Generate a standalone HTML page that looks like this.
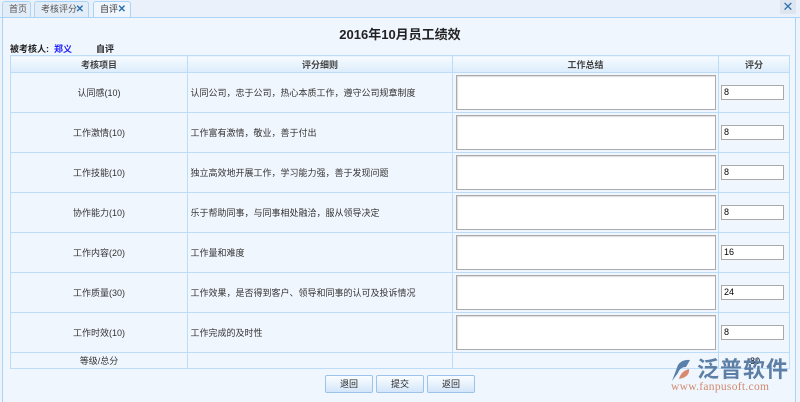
<!DOCTYPE html>
<html><head><meta charset="utf-8"><style>
*{box-sizing:border-box;margin:0;padding:0}
body{width:800px;height:402px;background:#eef4fc;font-family:"Liberation Sans","Noto Sans CJK SC",sans-serif;font-size:9px;color:#333;position:relative;overflow:hidden}
.tabs{position:absolute;left:0;top:0;width:800px;height:18px;background:#eaf1fa;border-bottom:1px solid #a9d4f5}
.tab{position:absolute;top:1px;height:17px;border:1px solid #a9d4f5;border-bottom:none;background:#e3edf8;border-radius:3px 3px 0 0;font-size:9px;line-height:15px;padding-left:6px;color:#555}
.tab b{color:#2a6fb3;font-size:10px;position:absolute;right:4px;top:0}
.panel{position:absolute;left:2px;top:17px;width:794px;height:385px;border:1px solid #a9d4f5;border-bottom:none;background:#f0f6fe}
.close{position:absolute;right:4px;top:0;width:16px;height:14px;background:#dde6ef;color:#2a6fb3;font-size:13px;line-height:14px;text-align:center}
h1{position:absolute;left:0;width:800px;top:24px;text-align:center;font-size:13px;font-weight:bold;color:#222}
.who{position:absolute;left:10px;top:42px;font-size:9px;font-weight:bold;color:#222}
table{position:absolute;left:10px;top:55px;border-collapse:collapse;width:780px}
td{border:1px solid #bcdcf7;font-size:9px;color:#333}
th{border:1px solid #bcdcf7;height:17px;font-size:9px;font-weight:bold;color:#444;background:linear-gradient(#f6fbff,#dcecfb)}
tr.r td{height:40px}
.c{text-align:center}
.ta{width:260px;height:35px;border:1px solid #aaa;background:#fff;margin:0 0 0 3px;display:block;box-shadow:inset 1px 1px 1px #ddd}
.in{width:63px;height:15px;border:1px solid #aaa;background:#fff;margin-left:2px;font-size:9px;line-height:13px;padding-left:2px;color:#000}
.btn{position:absolute;top:375px;width:48px;height:18px;border:1px solid #9cc4ea;border-radius:2px;background:linear-gradient(#fafdff,#d4e6fa);text-align:center;font-size:9px;line-height:16px;color:#222}
.logo{position:absolute;left:668px;top:355px}
</style></head><body>
<div class="tabs">
<div class="tab" style="left:2px;width:29px">首页</div>
<div class="tab" style="left:34px;width:55px">考核评分<b>✕</b></div>
<div class="tab" style="left:93px;width:38px;background:#f0f6fe;height:18px;color:#333">自评<b>✕</b></div>
<div class="close">✕</div>
</div>
<div class="panel"></div>
<h1>2016年10月员工绩效</h1>
<div class="who">被考核人:&nbsp; <span style="color:#1a1aff">郑义</span><span style="margin-left:24px">自评</span></div>
<table>
<tr><th style="width:177px">考核项目</th><th style="width:265px">评分细则</th><th style="width:266px">工作总结</th><th>评分</th></tr>
<tr class="r"><td class="c">认同感(10)</td><td>&nbsp;认同公司，忠于公司，热心本质工作，遵守公司规章制度</td><td><div class="ta"></div></td><td><div class="in">8</div></td></tr>
<tr class="r"><td class="c">工作激情(10)</td><td>&nbsp;工作富有激情，敬业，善于付出</td><td><div class="ta"></div></td><td><div class="in">8</div></td></tr>
<tr class="r"><td class="c">工作技能(10)</td><td>&nbsp;独立高效地开展工作，学习能力强，善于发现问题</td><td><div class="ta"></div></td><td><div class="in">8</div></td></tr>
<tr class="r"><td class="c">协作能力(10)</td><td>&nbsp;乐于帮助同事，与同事相处融洽，服从领导决定</td><td><div class="ta"></div></td><td><div class="in">8</div></td></tr>
<tr class="r"><td class="c">工作内容(20)</td><td>&nbsp;工作量和难度</td><td><div class="ta"></div></td><td><div class="in">16</div></td></tr>
<tr class="r"><td class="c">工作质量(30)</td><td>&nbsp;工作效果，是否得到客户、领导和同事的认可及投诉情况</td><td><div class="ta"></div></td><td><div class="in">24</div></td></tr>
<tr class="r"><td class="c">工作时效(10)</td><td>&nbsp;工作完成的及时性</td><td><div class="ta"></div></td><td><div class="in">8</div></td></tr>
<tr><td class="c" style="height:16px">等级/总分</td><td></td><td></td><td style="padding-left:31px;color:#000">80</td></tr>
</table>
<div class="btn" style="left:325px">退回</div>
<div class="btn" style="left:376px">提交</div>
<div class="btn" style="left:427px">返回</div>
<div class="logo">
<svg width="26" height="26" viewBox="0 0 26 26" style="position:absolute;left:0;top:2px"><path d="M4 24 L10 8 Q14 2 22 3 L18 10 Q12 10 10 16 Z" fill="#5a7faa"/><path d="M11 22 Q13 14 21 12 Q22 20 11 22Z" fill="#d88a70"/></svg>
<div style="position:absolute;left:29px;top:0;font-size:22px;font-weight:bold;color:#5d7fa6;letter-spacing:1px;white-space:nowrap;font-family:'Noto Sans CJK SC',sans-serif;line-height:26px">泛普软件</div>
<div style="position:absolute;left:3px;top:26px;font-size:11.5px;color:#d08a70;white-space:nowrap;font-family:'Liberation Serif',serif;letter-spacing:0.3px">www.fanpusoft.com</div>
</div>
</body></html>
